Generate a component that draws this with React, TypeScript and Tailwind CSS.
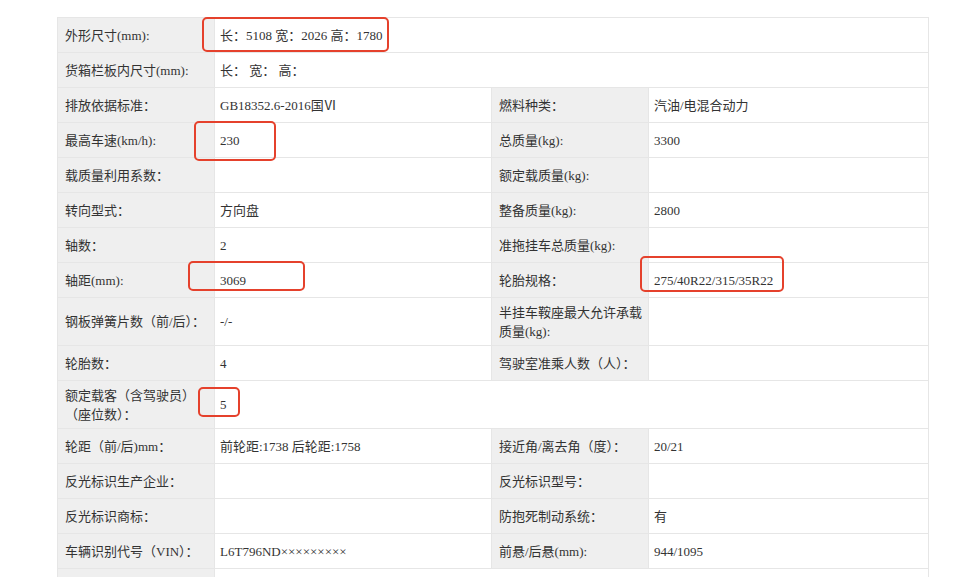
import React from "react";

type Row = {
  label: React.ReactNode;
  value?: React.ReactNode;
  label2?: React.ReactNode;
  value2?: React.ReactNode;
  span?: boolean;
};

const rows: Row[] = [
  { label: "外形尺寸(mm):", value: "长：5108 宽：2026 高：1780", span: true },
  { label: "货箱栏板内尺寸(mm):", value: "长： 宽： 高：", span: true },
  { label: "排放依据标准：", value: "GB18352.6-2016国Ⅵ", label2: "燃料种类：", value2: "汽油/电混合动力" },
  { label: "最高车速(km/h):", value: "230", label2: "总质量(kg):", value2: "3300" },
  { label: "载质量利用系数：", value: "", label2: "额定载质量(kg):", value2: "" },
  { label: "转向型式：", value: "方向盘", label2: "整备质量(kg):", value2: "2800" },
  { label: "轴数：", value: "2", label2: "准拖挂车总质量(kg):", value2: "" },
  { label: "轴距(mm):", value: "3069", label2: "轮胎规格：", value2: "275/40R22/315/35R22" },
  {
    label: "钢板弹簧片数（前/后）：",
    value: "-/-",
    label2: (
      <>
        半挂车鞍座最大允许承载
        <br />
        质量(kg):
      </>
    ),
    value2: "",
  },
  { label: "轮胎数：", value: "4", label2: "驾驶室准乘人数（人）：", value2: "" },
  {
    label: (
      <>
        额定载客（含驾驶员）
        <br />
        （座位数）：
      </>
    ),
    value: "5",
    span: true,
  },
  { label: "轮距（前/后)mm：", value: "前轮距:1738 后轮距:1758", label2: "接近角/离去角（度）：", value2: "20/21" },
  { label: "反光标识生产企业：", value: "", label2: "反光标识型号：", value2: "" },
  { label: "反光标识商标：", value: "", label2: "防抱死制动系统：", value2: "有" },
  { label: "车辆识别代号（VIN）：", value: "L6T796ND×××××××××", label2: "前悬/后悬(mm):", value2: "944/1095" },
  { label: "", value: "", span: true },
];

const labelCls =
  "bg-[#efefef] border border-[#e6e6e6] h-[35px] py-[4.5px] pl-[7px] pr-[2px] align-middle text-left font-normal whitespace-nowrap";
const valueCls =
  "bg-white border border-[#e6e6e6] h-[35px] py-[4.5px] pl-[5px] pr-[4px] align-middle text-left whitespace-nowrap";

// red annotation boxes drawn over the table
const marks = [
  "left-[145px] top-[0px] w-[187px] h-[35px]",
  "left-[137px] top-[104px] w-[82px] h-[40px]",
  "left-[131px] top-[244px] w-[117px] h-[30px]",
  "left-[583px] top-[239px] w-[144px] h-[36px]",
  "left-[141px] top-[370px] w-[42px] h-[30px]",
];

export default function App() {
  return (
    <div className="w-[960px] h-[577px] overflow-hidden bg-white pt-[17px] pl-[57px]">
      <div
        className="relative w-[871px] text-[13px] leading-[19px] text-[#333]"
        style={{ fontFamily: '"Liberation Serif", "Noto Sans CJK SC", serif' }}
      >
        <table className="w-[871px] border-collapse table-fixed">
          <colgroup>
            <col className="w-[157px]" />
            <col className="w-[277px]" />
            <col className="w-[157px]" />
            <col className="w-[280px]" />
          </colgroup>
          <tbody>
            {rows.map((row, i) => (
              <tr key={i}>
                <th className={labelCls}>{row.label}</th>
                {row.span ? (
                  <td className={valueCls} colSpan={3}>
                    {row.value}
                  </td>
                ) : (
                  <>
                    <td className={valueCls}>{row.value}</td>
                    <th className={labelCls}>{row.label2}</th>
                    <td className={valueCls}>{row.value2}</td>
                  </>
                )}
              </tr>
            ))}
          </tbody>
        </table>
        {marks.map((m, i) => (
          <div
            key={i}
            className={`absolute ${m} border-2 border-[#e5412c] rounded-[5px]`}
          />
        ))}
      </div>
    </div>
  );
}
